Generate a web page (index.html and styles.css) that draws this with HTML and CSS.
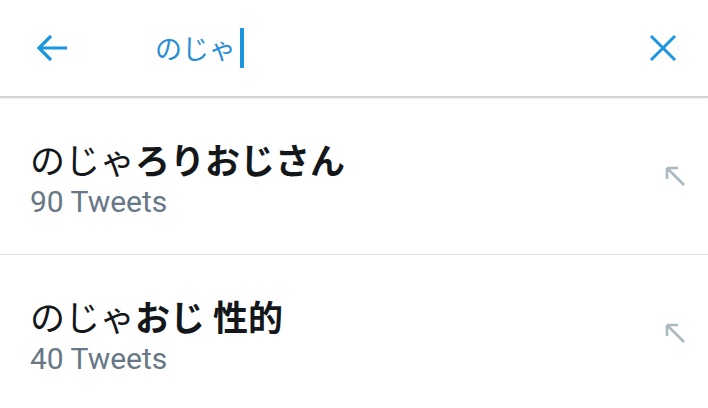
FILE: index.html
```html
<!DOCTYPE html>
<html lang="ja">
<head>
<meta charset="utf-8">
<link rel="stylesheet" href="styles.css">
</head>
<body>
<div class="app">
  <header class="header">
    <div class="back">
      <svg width="32" height="28" viewBox="0 0 32 28"><path d="M3 14 H31 M15 2 L3 14 L15 26" fill="none" stroke="#1b95e0" stroke-width="3.2" stroke-linecap="butt" stroke-linejoin="miter"/></svg>
    </div>
    <div class="search">
      <span class="query">のじゃ</span><span class="caret"></span>
    </div>
    <div class="close">
      <svg width="28" height="28" viewBox="0 0 28 28"><path d="M2 2 L26 26 M26 2 L2 26" fill="none" stroke="#1b95e0" stroke-width="3"/></svg>
    </div>
  </header>
  <ul class="list">
    <li class="item">
      <div class="text">
        <div class="title">のじゃ<b>ろりおじさん</b></div>
        <div class="count">90 Tweets</div>
      </div>
      <svg class="fill" width="22" height="22" viewBox="0 0 22 22"><path d="M3 3 L20 20 M3 3 H14 M3 3 V14" fill="none" stroke="#aab8c2" stroke-width="2.6"/></svg>
    </li>
    <li class="item">
      <div class="text">
        <div class="title">のじゃ<b>おじ 性的</b></div>
        <div class="count">40 Tweets</div>
      </div>
      <svg class="fill" width="22" height="22" viewBox="0 0 22 22"><path d="M3 3 L20 20 M3 3 H14 M3 3 V14" fill="none" stroke="#aab8c2" stroke-width="2.6"/></svg>
    </li>
  </ul>
</div>
</body>
</html>
```

FILE: styles.css
```css
* { box-sizing: border-box; }
html, body { margin: 0; padding: 0; background: #fff; }
body {
  width: 708px;
  height: 408px;
  overflow: hidden;
  font-family: Roboto, "Noto Sans CJK JP", sans-serif;
}
.app { display: flex; flex-direction: column; }
.header {
  height: 98px;
  display: flex;
  align-items: center;
  border-bottom: 2px solid #d4d4d4;
  box-shadow: 0 1px 2px rgba(0,0,0,0.08);
  padding: 0 31px 0 36px;
}
.back { width: 32px; height: 28px; display: flex; }
.search {
  flex: 1;
  display: flex;
  align-items: center;
  padding-left: 87px;
}
.query {
  font-family: "Noto Sans CJK JP", sans-serif;
  font-size: 27px;
  line-height: 40px;
  color: #2a8ed6;
}
.caret {
  width: 4px;
  height: 40px;
  background: #1b95e0;
  margin-left: 4px;
}
.close { width: 28px; height: 28px; display: flex; }
.list { list-style: none; margin: 0; padding: 0; }
.item {
  height: 157px;
  display: flex;
  align-items: center;
  padding: 6px 22px 0 30px;
  border-bottom: 1px solid #e1e1e1;
}
.text { flex: 1; }
.title {
  font-family: "Noto Sans CJK JP", sans-serif;
  font-size: 35px;
  line-height: 42px;
  color: #14171a;
}
.title b { font-weight: 700; }
.count {
  font-family: Roboto, sans-serif;
  font-size: 30px;
  line-height: 36px;
  color: #687785;
  margin-top: 4px;
}
.fill { margin-top: -6px; }
```
